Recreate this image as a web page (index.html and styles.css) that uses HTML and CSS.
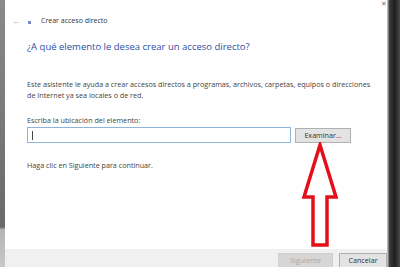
FILE: index.html
```html
<!DOCTYPE html>
<html lang="es">
<head>
  <meta charset="UTF-8" />
  <title>Crear acceso directo</title>
  <link rel="stylesheet" href="styles.css">
</head>
<body>
  <div class="screen">
    <div class="edge-left"></div>
    <div class="dialog">
      <div class="titlebar">
        <span class="back">&#8592;</span>
        <span class="app-icon"></span>
        <span class="caption">Crear acceso directo</span>
        <span class="close">&#10005;</span>
      </div>
      <div class="content">
        <h1>¿A qué elemento le desea crear un acceso directo?</h1>
        <p class="intro">Este asistente le ayuda a crear accesos directos a programas, archivos, carpetas, equipos o direcciones de Internet ya sea locales o de red.</p>
        <label class="field-label">Escriba la ubicación del elemento:</label>
        <div class="field-row">
          <div class="input"><span class="caret"></span></div>
          <div class="btn">Examinar...</div>
        </div>
        <p class="hint">Haga clic en Siguiente para continuar.</p>
        <svg class="arrow" width="40" height="106" viewBox="0 0 40 106">
          <path d="M20 3 L36 55 L27 55 L27 103 L13 103 L13 55 L4 55 Z" fill="#fff" stroke="#e3101b" stroke-width="3.5" stroke-linejoin="miter"/>
        </svg>
      </div>
      <div class="footer">
        <div class="btn disabled">Siguiente</div>
        <div class="btn">Cancelar</div>
      </div>
    </div>
    <div class="edge-right"></div>
  </div>
</body>
</html>
```

FILE: styles.css
```css
body {
  margin: 0;
  background: #fff;
  font-family: 'Open Sans', 'Noto Sans', sans-serif;
  color: #222;
}
.screen {
  display: flex;
  width: 400px;
  height: 267px;
  overflow: hidden;
}
.edge-left {
  width: 5px;
  background: linear-gradient(#8a8a8a 0%, #6a6a6a 85%, #b5b5b5 86%, #c8c8c8 100%);
}
.edge-right {
  width: 13px;
  background: linear-gradient(90deg, #d8d8d8 0%, #3a3a3a 20%, #1e1e1e 60%, #4a4a4a 100%);
}
.dialog {
  flex: 1;
  display: flex;
  flex-direction: column;
  background: #fff;
}
.titlebar {
  position: relative;
  display: flex;
  align-items: center;
  height: 24px;
  padding: 8px 0 0 7px;
  font-size: 7px;
}
.back {
  color: #c4c4c4;
  font-size: 9px;
  width: 15px;
}
.app-icon {
  width: 3px;
  height: 3px;
  background: #7c86c9;
  margin: 4px 10px 0 1px;
}
.caption {
  color: #333;
}
.close {
  position: absolute;
  right: 0;
  top: -1px;
  color: #777;
  font-size: 7px;
}
.content {
  position: relative;
  flex: 1;
  padding: 8px 0 0 22px;
}
h1 {
  margin: 0;
  font-size: 9.5px;
  font-weight: normal;
  color: #2a4ea4;
}
.intro {
  margin: 26px 0 0 0;
  width: 352px;
  font-size: 7.2px;
  line-height: 11px;
  color: #444;
}
.field-label {
  display: block;
  margin-top: 14px;
  font-size: 7.2px;
  color: #444;
}
.field-row {
  display: flex;
  align-items: center;
  gap: 4px;
  margin-top: 2px;
}
.input {
  width: 258px;
  height: 14px;
  border: 1px solid #8fb3d9;
  display: flex;
  align-items: center;
  padding-left: 4px;
}
.caret {
  width: 1px;
  height: 9px;
  background: #444;
}
.btn {
  width: 54px;
  height: 13px;
  border: 1px solid #b0b0b0;
  background: #e3e3e3;
  font-size: 7.2px;
  color: #333;
  text-align: center;
  line-height: 13px;
}
.hint {
  margin: 17px 0 0 0;
  font-size: 7.2px;
  color: #444;
}
.arrow {
  position: absolute;
  left: 295px;
  top: 110px;
}
.footer {
  height: 14px;
  background: #f0f0f0;
  display: flex;
  justify-content: flex-end;
  gap: 6px;
  padding: 4px 0 0 0;
}
.footer .btn {
  width: 53px;
}
.footer .btn:last-child {
  width: 46px;
}
.footer .disabled {
  color: #aaa;
  background: #d6d6d6;
  border-color: #cfcfcf;
}
```
